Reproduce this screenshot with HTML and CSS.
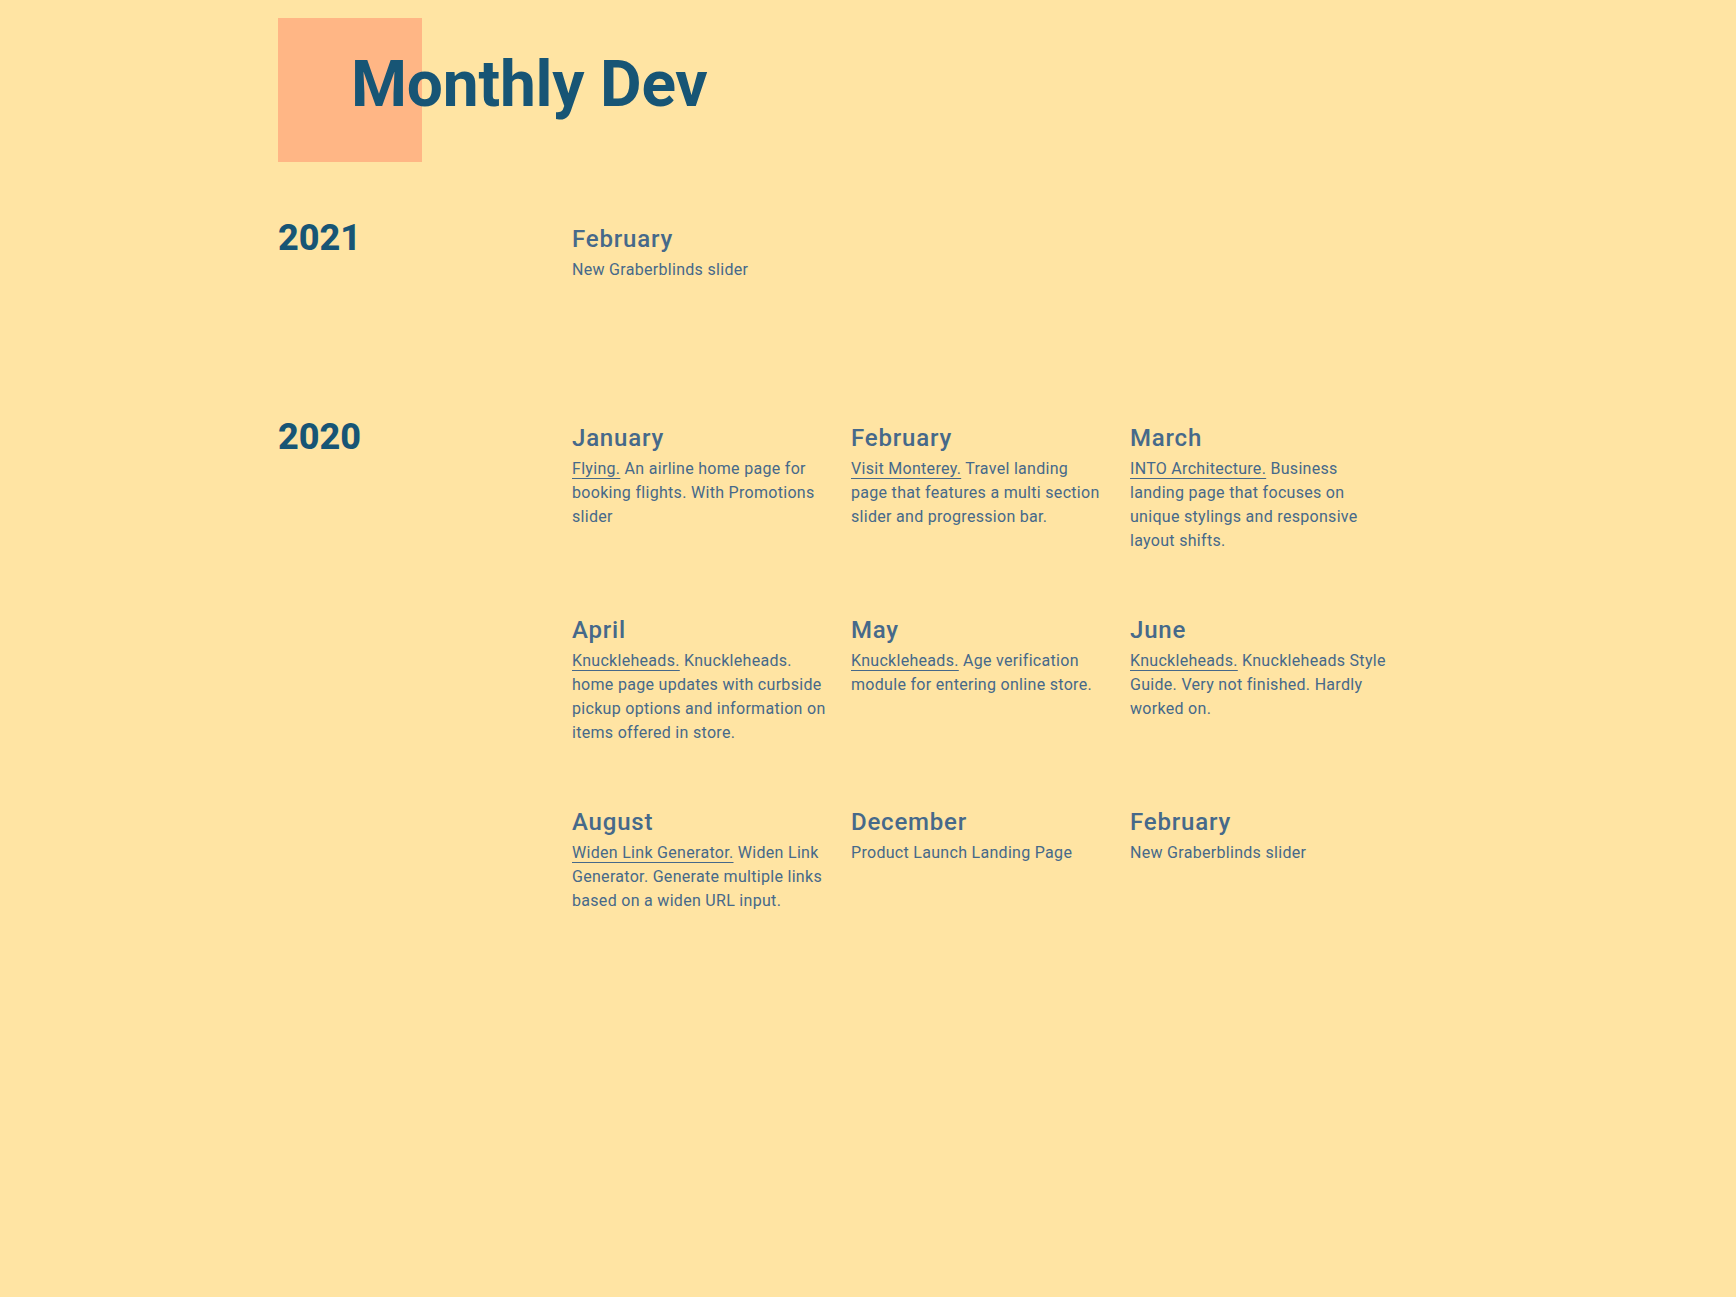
FILE: index.html
```html
<!DOCTYPE html>
<html lang="en">
<head>
<meta charset="utf-8">
<title>Monthly Dev</title>
<link rel="stylesheet" href="styles.css">
</head>
<body>
<div class="page">
  <header class="masthead">
    <h1 class="title">Monthly Dev</h1>
  </header>

  <main class="years">
    <section class="year">
      <h2 class="year-label">2021</h2>
      <div class="months">
        <article class="month">
          <h3 class="month-name">February</h3>
          <p class="month-text">New Graberblinds slider</p>
        </article>
      </div>
    </section>

    <section class="year">
      <h2 class="year-label">2020</h2>
      <div class="months">
        <article class="month">
          <h3 class="month-name">January</h3>
          <p class="month-text"><a href="#">Flying.</a> An airline home page for booking flights. With Promotions slider</p>
        </article>
        <article class="month">
          <h3 class="month-name">February</h3>
          <p class="month-text"><a href="#">Visit Monterey.</a> Travel landing page that features a multi section slider and progression bar.</p>
        </article>
        <article class="month">
          <h3 class="month-name">March</h3>
          <p class="month-text"><a href="#">INTO Architecture.</a> Business landing page that focuses on unique stylings and responsive layout shifts.</p>
        </article>
        <article class="month">
          <h3 class="month-name">April</h3>
          <p class="month-text"><a href="#">Knuckleheads.</a> Knuckleheads. home page updates with curbside pickup options and information on items offered in store.</p>
        </article>
        <article class="month">
          <h3 class="month-name">May</h3>
          <p class="month-text"><a href="#">Knuckleheads.</a> Age verification module for entering online store.</p>
        </article>
        <article class="month">
          <h3 class="month-name">June</h3>
          <p class="month-text"><a href="#">Knuckleheads.</a> Knuckleheads Style Guide. Very not finished. Hardly worked on.</p>
        </article>
        <article class="month">
          <h3 class="month-name">August</h3>
          <p class="month-text"><a href="#">Widen Link Generator.</a> Widen Link Generator. Generate multiple links based on a widen URL input.</p>
        </article>
        <article class="month">
          <h3 class="month-name">December</h3>
          <p class="month-text">Product Launch Landing Page</p>
        </article>
        <article class="month">
          <h3 class="month-name">February</h3>
          <p class="month-text">New Graberblinds slider</p>
        </article>
      </div>
    </section>
  </main>
</div>
</body>
</html>
```

FILE: styles.css
```css
html, body {
  margin: 0;
  padding: 0;
  background: #ffe4a3;
  min-height: 100%;
}

body {
  font-family: Roboto, "Liberation Sans", sans-serif;
  color: #46698a;
}

.page {
  width: 1180px;
  margin: 0 auto;
}

.masthead {
  position: relative;
  height: 144px;
  margin-top: 18px;
}

.masthead::before {
  content: "";
  position: absolute;
  left: 0;
  top: 0;
  width: 144px;
  height: 144px;
  background: #ffb685;
}

.title {
  position: relative;
  margin: 0;
  padding: 35px 0 0 73px;
  font-size: 64px;
  line-height: 64px;
  font-weight: 700;
  color: #175575;
  letter-spacing: -0.2px;
}

.years {
  display: flex;
  flex-direction: column;
  gap: 133px;
  margin-top: 54px;
}

.year {
  display: grid;
  grid-template-columns: 294px 1fr;
}

.year-label {
  margin: 0;
  font-size: 36px;
  line-height: 44px;
  font-weight: 800;
  color: #175575;
}

.months {
  display: grid;
  grid-template-columns: repeat(3, 256px);
  column-gap: 23px;
  row-gap: 62px;
  padding-top: 8px;
}

.month-name {
  margin: 0;
  font-size: 24px;
  line-height: 30px;
  font-weight: 500;
  letter-spacing: 0.8px;
  color: #46698a;
}

.month-text {
  margin: 4px 0 0;
  font-size: 16px;
  line-height: 24px;
  letter-spacing: 0.3px;
}

.month-text a {
  color: inherit;
  text-decoration: underline;
  text-underline-offset: 4px;
  text-decoration-thickness: 1px;
}
```
